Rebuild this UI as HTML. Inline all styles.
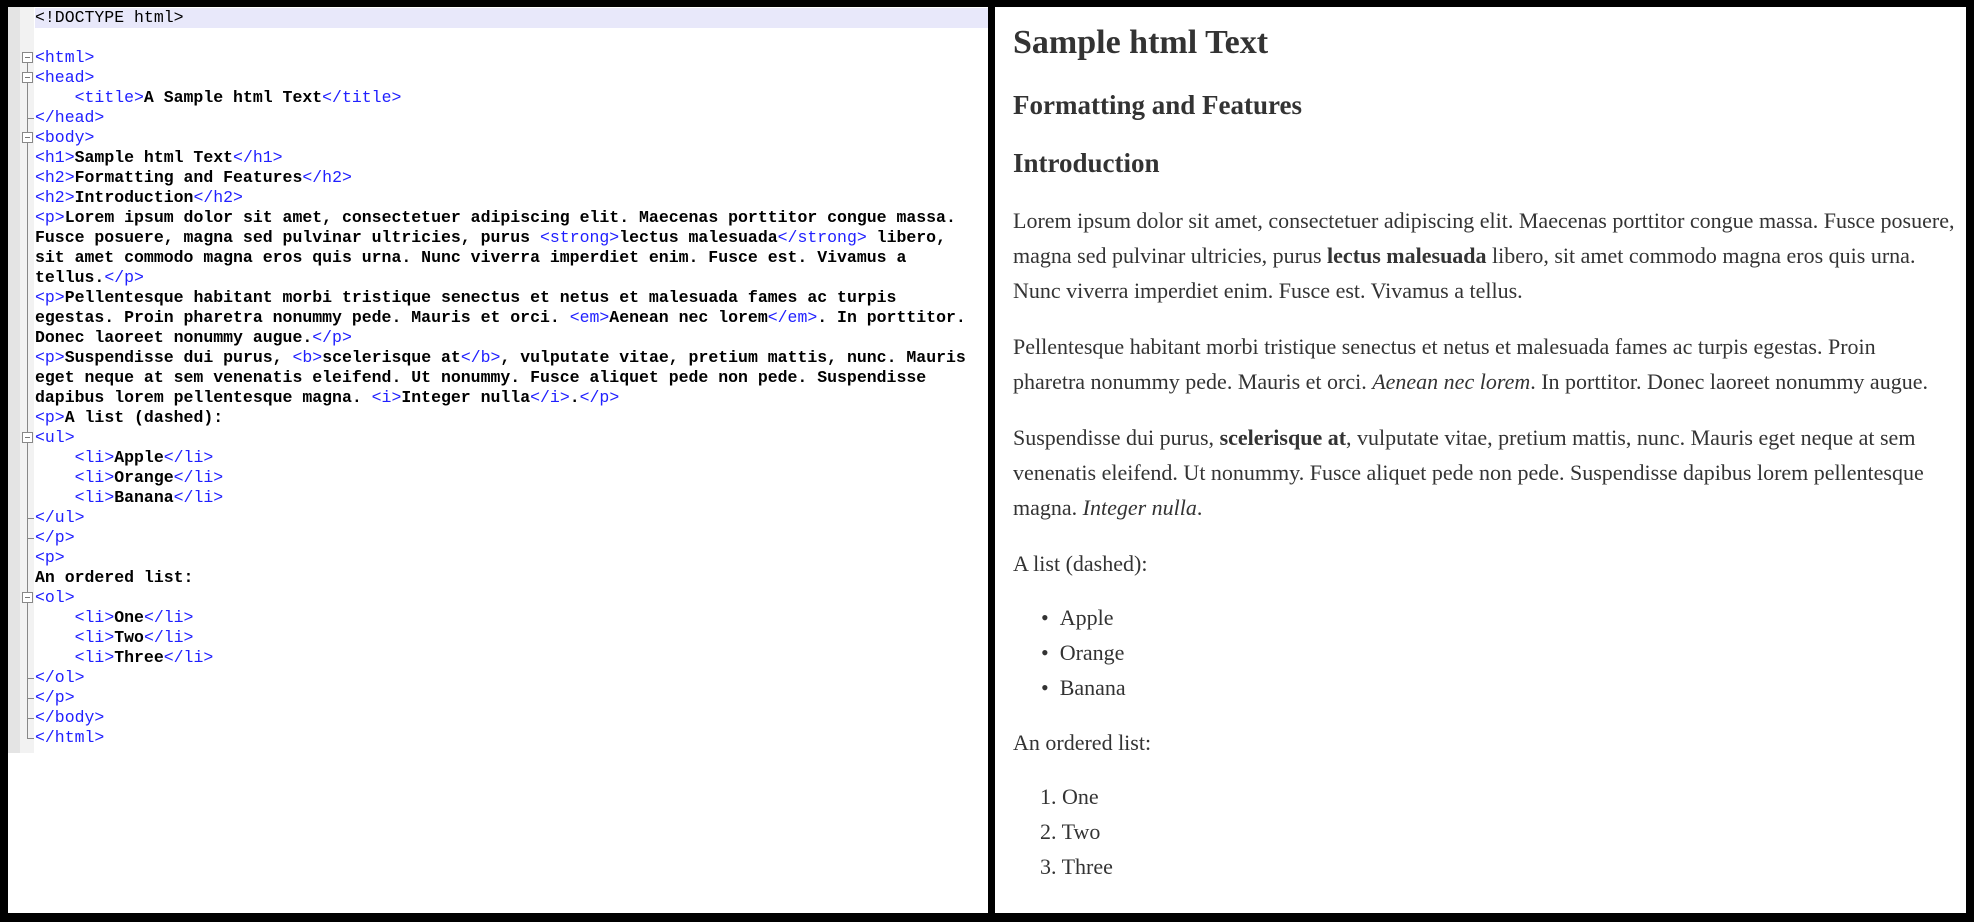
<!DOCTYPE html>
<html><head><style>
*{margin:0;padding:0;box-sizing:border-box}
body{width:1974px;height:922px;background:#000;position:relative;overflow:hidden}
#l{position:absolute;left:8px;top:7px;width:980px;height:906px;background:#fff}
#g1{position:absolute;left:0;top:0;width:12px;height:746px;background:#e4e4e4}
#g2{position:absolute;left:12px;top:0;width:14px;height:746px;background:#f2f2f2}
#hl{position:absolute;left:27px;top:1px;width:953px;height:20px;background:#e8e8fa}
.c{position:absolute;left:27px;font:16.5px/20px "Liberation Mono",monospace;color:#000;white-space:pre;font-weight:bold}
.c i{font-style:normal;color:#2020ff;font-weight:normal}
.c s{text-decoration:none;font-weight:normal}
.fb{position:absolute;left:14px;width:11px;height:11px;border:1px solid #888;background:#fff}
.fb:after{content:"";position:absolute;left:2px;top:4px;width:5px;height:1px;background:#777}
.vl{position:absolute;left:19px;width:1px;background:#888}
.tk{position:absolute;left:19px;width:7px;height:1px;background:#888}
#r{position:absolute;left:995px;top:7px;width:971px;height:906px;background:#fff;color:#333;font-family:"Liberation Serif",serif}
.t{position:absolute;left:18px;white-space:nowrap;font-size:22px;line-height:35px}
h1,h2{position:absolute;left:18px;white-space:nowrap;font-weight:bold}
</style></head><body>
<div id="l">
<div id="g1"></div><div id="g2"></div><div id="hl"></div>
<div class="vl" style="top:52px;height:679px"></div>
<div class="fb" style="top:45px"></div><div class="fb" style="top:65px"></div><div class="fb" style="top:125px"></div>
<div class="fb" style="top:425px"></div><div class="fb" style="top:585px"></div>
<div class="tk" style="top:111px"></div><div class="tk" style="top:511px"></div><div class="tk" style="top:531px"></div>
<div class="tk" style="top:671px"></div><div class="tk" style="top:691px"></div><div class="tk" style="top:711px"></div><div class="tk" style="top:731px"></div>
<div class="c" style="top:1px"><s>&lt;!DOCTYPE html&gt;</s></div>
<div class="c" style="top:41px"><i>&lt;html&gt;</i></div>
<div class="c" style="top:61px"><i>&lt;head&gt;</i></div>
<div class="c" style="top:81px">    <i>&lt;title&gt;</i>A Sample html Text<i>&lt;/title&gt;</i></div>
<div class="c" style="top:101px"><i>&lt;/head&gt;</i></div>
<div class="c" style="top:121px"><i>&lt;body&gt;</i></div>
<div class="c" style="top:141px"><i>&lt;h1&gt;</i>Sample html Text<i>&lt;/h1&gt;</i></div>
<div class="c" style="top:161px"><i>&lt;h2&gt;</i>Formatting and Features<i>&lt;/h2&gt;</i></div>
<div class="c" style="top:181px"><i>&lt;h2&gt;</i>Introduction<i>&lt;/h2&gt;</i></div>
<div class="c" style="top:201px"><i>&lt;p&gt;</i>Lorem ipsum dolor sit amet, consectetuer adipiscing elit. Maecenas porttitor congue massa.</div>
<div class="c" style="top:221px">Fusce posuere, magna sed pulvinar ultricies, purus <i>&lt;strong&gt;</i>lectus malesuada<i>&lt;/strong&gt;</i> libero,</div>
<div class="c" style="top:241px">sit amet commodo magna eros quis urna. Nunc viverra imperdiet enim. Fusce est. Vivamus a</div>
<div class="c" style="top:261px">tellus.<i>&lt;/p&gt;</i></div>
<div class="c" style="top:281px"><i>&lt;p&gt;</i>Pellentesque habitant morbi tristique senectus et netus et malesuada fames ac turpis</div>
<div class="c" style="top:301px">egestas. Proin pharetra nonummy pede. Mauris et orci. <i>&lt;em&gt;</i>Aenean nec lorem<i>&lt;/em&gt;</i>. In porttitor.</div>
<div class="c" style="top:321px">Donec laoreet nonummy augue.<i>&lt;/p&gt;</i></div>
<div class="c" style="top:341px"><i>&lt;p&gt;</i>Suspendisse dui purus, <i>&lt;b&gt;</i>scelerisque at<i>&lt;/b&gt;</i>, vulputate vitae, pretium mattis, nunc. Mauris</div>
<div class="c" style="top:361px">eget neque at sem venenatis eleifend. Ut nonummy. Fusce aliquet pede non pede. Suspendisse</div>
<div class="c" style="top:381px">dapibus lorem pellentesque magna. <i>&lt;i&gt;</i>Integer nulla<i>&lt;/i&gt;</i>.<i>&lt;/p&gt;</i></div>
<div class="c" style="top:401px"><i>&lt;p&gt;</i>A list (dashed):</div>
<div class="c" style="top:421px"><i>&lt;ul&gt;</i></div>
<div class="c" style="top:441px">    <i>&lt;li&gt;</i>Apple<i>&lt;/li&gt;</i></div>
<div class="c" style="top:461px">    <i>&lt;li&gt;</i>Orange<i>&lt;/li&gt;</i></div>
<div class="c" style="top:481px">    <i>&lt;li&gt;</i>Banana<i>&lt;/li&gt;</i></div>
<div class="c" style="top:501px"><i>&lt;/ul&gt;</i></div>
<div class="c" style="top:521px"><i>&lt;/p&gt;</i></div>
<div class="c" style="top:541px"><i>&lt;p&gt;</i></div>
<div class="c" style="top:561px">An ordered list:</div>
<div class="c" style="top:581px"><i>&lt;ol&gt;</i></div>
<div class="c" style="top:601px">    <i>&lt;li&gt;</i>One<i>&lt;/li&gt;</i></div>
<div class="c" style="top:621px">    <i>&lt;li&gt;</i>Two<i>&lt;/li&gt;</i></div>
<div class="c" style="top:641px">    <i>&lt;li&gt;</i>Three<i>&lt;/li&gt;</i></div>
<div class="c" style="top:661px"><i>&lt;/ol&gt;</i></div>
<div class="c" style="top:681px"><i>&lt;/p&gt;</i></div>
<div class="c" style="top:701px"><i>&lt;/body&gt;</i></div>
<div class="c" style="top:721px"><i>&lt;/html&gt;</i></div>
</div>
<div id="r">
<h1 style="top:17px;font-size:34px">Sample html Text</h1>
<h2 style="top:83px;font-size:27px">Formatting and Features</h2>
<h2 style="top:141px;font-size:27px">Introduction</h2>
<div class="t" style="top:196px">Lorem ipsum dolor sit amet, consectetuer adipiscing elit. Maecenas porttitor congue massa. Fusce posuere,</div>
<div class="t" style="top:231px">magna sed pulvinar ultricies, purus <b>lectus malesuada</b> libero, sit amet commodo magna eros quis urna.</div>
<div class="t" style="top:266px">Nunc viverra imperdiet enim. Fusce est. Vivamus a tellus.</div>
<div class="t" style="top:322px">Pellentesque habitant morbi tristique senectus et netus et malesuada fames ac turpis egestas. Proin</div>
<div class="t" style="top:357px">pharetra nonummy pede. Mauris et orci. <i>Aenean nec lorem</i>. In porttitor. Donec laoreet nonummy augue.</div>
<div class="t" style="top:413px">Suspendisse dui purus, <b>scelerisque at</b>, vulputate vitae, pretium mattis, nunc. Mauris eget neque at sem</div>
<div class="t" style="top:448px">venenatis eleifend. Ut nonummy. Fusce aliquet pede non pede. Suspendisse dapibus lorem pellentesque</div>
<div class="t" style="top:483px">magna. <i>Integer nulla</i>.</div>
<div class="t" style="top:539px">A list (dashed):</div>
<div class="t" style="top:593px;left:46px">•&nbsp;&nbsp;Apple</div>
<div class="t" style="top:628px;left:46px">•&nbsp;&nbsp;Orange</div>
<div class="t" style="top:663px;left:46px">•&nbsp;&nbsp;Banana</div>
<div class="t" style="top:718px">An ordered list:</div>
<div class="t" style="top:772px;left:45px">1. One</div>
<div class="t" style="top:807px;left:45px">2. Two</div>
<div class="t" style="top:842px;left:45px">3. Three</div>
</div>
</body></html>
